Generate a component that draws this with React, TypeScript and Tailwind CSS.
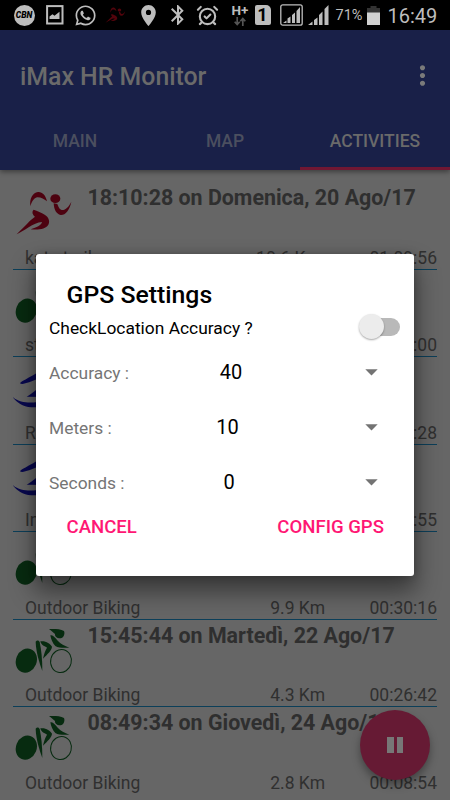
import React from "react";
import { FaWhatsapp } from "react-icons/fa";
import { MdLocationOn, MdBluetooth, MdMoreVert } from "react-icons/md";
import { AlarmClockCheck } from "lucide-react";

type Sport = "run" | "bike" | "swim";

interface Activity {
  sport: Sport;
  title: string;
  name: string;
  distance: string;
  duration: string;
}

const activities: Activity[] = [
  { sport: "run", title: "18:10:28 on Domenica, 20 Ago/17", name: "kat - trail", distance: "10.6 Km\u00a0", duration: "01:09:56" },
  { sport: "bike", title: "", name: "street", distance: "", duration: "00:30:00" },
  { sport: "swim", title: "", name: "Rowing", distance: "", duration: "00:21:28" },
  { sport: "swim", title: "", name: "Indoor", distance: "", duration: "00:40:55" },
  { sport: "bike", title: "", name: "Outdoor Biking", distance: "9.9 Km", duration: "00:30:16" },
  { sport: "bike", title: "15:45:44 on Martedì, 22 Ago/17", name: "Outdoor Biking", distance: "4.3 Km", duration: "00:26:42" },
  { sport: "bike", title: "08:49:34 on Giovedì, 24 Ago/17", name: "Outdoor Biking", distance: "2.8 Km", duration: "00:08:54" },
];

function RunnerShape() {
  return (
    <g>
      <path d="M91 110C88 88 97 69 114 67C127 66 137 77 141 95C132 88 122 82 111 83C102 85 95 96 91 110Z" />
      <ellipse cx="166" cy="87" rx="15" ry="13" />
      <path d="M161 101C162 121 169 133 182 136C196 137 209 121 214 96C206 112 196 122 186 121C177 119 175 110 172 103Z" />
      <path d="M101 120C112 123 124 129 134 135C146 142 151 155 145 165C137 178 118 181 92 179C110 173 124 167 126 157C112 158 100 164 86 173C74 181 61 188 50 194C61 182 76 168 90 153L105 141C97 135 95 125 101 120Z" />
    </g>
  );
}

function SportIcon({ sport }: { sport: Sport }) {
  if (sport === "run") {
    return (
      <svg className="h-[60px] w-[60px] shrink-0 fill-[#4d0210]" viewBox="39 37 180 180">
        <RunnerShape />
      </svg>
    );
  }
  if (sport === "bike") {
    return (
      <svg className="h-[60px] w-[60px] shrink-0 fill-[#072b10]" viewBox="39 150 180 180">
        <ellipse cx="79" cy="272" rx="31" ry="37" transform="rotate(22 79 272)" />
        <ellipse cx="183" cy="273" rx="31" ry="35" fill="none" stroke="#072b10" strokeWidth="3" transform="rotate(14 183 273)" />
        <path d="M107 215C111 210 117 211 119 217C124 240 127 268 127 303C118 278 108 246 107 215Z" />
        <path d="M121 214C135 211 151 220 156 230C155 241 143 252 129 266C132 252 136 241 141 233C134 228 124 227 121 214Z" />
        <path d="M151 196C159 193 166 204 174 213C181 222 194 228 208 233C192 234 176 234 166 228C158 221 153 207 151 196Z" />
        <path d="M147 177C162 177 181 176 192 183C196 192 190 204 182 205C173 206 164 200 165 192C159 187 154 182 147 177Z" />
      </svg>
    );
  }
  return (
    <svg className="h-[60px] w-[60px] shrink-0 fill-[#08084f]" viewBox="39 262 180 180">
      <path d="M60 341C63 335 85 326 110 310C132 297 151 293 165 305C146 309 126 324 110 329C93 336 68 347 60 341Z" />
      <path d="M80 381C90 377 99 368 111 359L132 351L153 382Z" />
      <path d="M38 382C57 399 83 400 108 398C145 395 173 388 207 397C173 404 133 414 94 413C67 411 49 397 38 382Z" />
    </svg>
  );
}

function ActivityRow({ item, last }: { item: Activity; last: boolean }) {
  return (
    <li className={last ? "flex h-[87.5px] flex-col" : "flex h-[87.5px] flex-col border-b border-[#0c3f59]"}>
      <div className="flex h-[65.6px]">
        <SportIcon sport={item.sport} />
        <h2 className="ml-[14.5px] h-[32px] whitespace-nowrap text-[21.4px] font-bold leading-[32px] text-[#2f2f2f]">{item.title}</h2>
      </div>
      <div className="flex h-[20px] whitespace-nowrap pl-3 text-[17.5px] leading-[20px] text-[#303030]">
        <span className="flex-1">{item.name}</span>
        <span className="w-[80px] text-right">{item.distance}</span>
        <span className="w-[112px] text-right">{item.duration}</span>
      </div>
    </li>
  );
}

function StatusBar() {
  return (
    <header className="flex h-[30px] items-center bg-black pl-[13.5px] text-[#bdbdbd]">
      <div className="flex h-[21px] w-[21px] items-center justify-center rounded-full bg-[#bdbdbd] text-[8.5px] font-black italic leading-none text-black">CBN</div>
      <svg className="ml-[11px] h-5 w-[18px]" viewBox="0 0 18 20">
        <rect x="1.1" y="1.1" width="15.4" height="17.4" fill="none" stroke="currentColor" strokeWidth="2" />
        <path d="M3.5 14V11.5L6.5 9.2L8.5 10.8L13.5 6.8V14Z" fill="currentColor" />
      </svg>
      <FaWhatsapp className="ml-[10px] h-[23px] w-[23px]" />
      <svg className="ml-[8px] h-[18px] w-[21px] fill-[#52040c]" viewBox="46 54 174 150">
        <RunnerShape />
      </svg>
      <MdLocationOn className="ml-[10px] h-[25px] w-[25px]" />
      <MdBluetooth className="ml-[5px] h-[24px] w-[24px]" />
      <AlarmClockCheck className="ml-[6px] h-[23px] w-[23px]" strokeWidth={2.2} />
      <div className="ml-[13px] flex w-[17px] flex-col items-center">
        <span className="text-[13.5px] font-bold leading-[13px]">H+</span>
        <svg className="h-[9px] w-[12px]" viewBox="0 0 12 9" fill="none" stroke="#555" strokeWidth="1.7">
          <path d="M3.2 0V7M0.7 4.7L3.2 7.5L5.7 4.7M8.8 9V2M6.3 4.3L8.8 1.5L11.3 4.3" />
        </svg>
      </div>
      <div className="ml-[6px] flex h-5 w-[16px] items-center justify-center rounded-[2px] rounded-tr-[5px] bg-[#bdbdbd] text-[18px] font-bold leading-none text-black">1</div>
      <svg className="ml-[9px] h-[22px] w-[23px]" viewBox="0 0 23 22" fill="currentColor">
        <rect x="0.8" y="0.8" width="21.4" height="20.4" rx="2" fill="none" stroke="currentColor" strokeWidth="1.3" />
        <path d="M3 19L6.5 16.5V19ZM7.5 14.5L10.5 12.5V19H7.5ZM12 11L15 8.5V19H12ZM16.5 7L20 3V19H16.5Z" />
      </svg>
      <svg className="ml-[5px] h-5 w-[21px]" viewBox="0 0 21 20" fill="currentColor">
        <path d="M0 20L4.5 16.5V20ZM6 15L9.5 12.5V20H6ZM11 10L14.5 6.5V20H11ZM16.5 4L20.5 0V20H16.5Z" />
      </svg>
      <span className="ml-[7px] mt-[2px] w-[28px] whitespace-nowrap text-[14.5px] leading-none">71%</span>
      <svg className="ml-[3px] h-[19px] w-[13px]" viewBox="0 0 13 19">
        <path d="M3.5 0H9.5V2H13V7H0V2H3.5Z" fill="#333" />
        <path d="M0 6.5H13V19H0Z" fill="#d0d0d0" />
      </svg>
      <span className="ml-[8px] mt-[1px] whitespace-nowrap text-[20px] leading-none">16:49</span>
    </header>
  );
}

function SettingRow({ label, value, width }: { label: string; value: string; width: string }) {
  return (
    <div className="flex h-[55px] items-center pl-[13px] pr-[36px]">
      <span className="mt-[2px] w-[157px] text-[17.4px] leading-6 text-[#757575]">{label}</span>
      <span className={width}>{value}</span>
      <svg className="ml-auto h-[7px] w-[13px] fill-[#737373]" viewBox="0 0 13 7">
        <path d="M0.3 0.3H12.7L6.5 6.5Z" />
      </svg>
    </div>
  );
}

function GpsDialog() {
  return (
    <section role="dialog" className="absolute left-[36px] top-[253.5px] h-[322.5px] w-[378px] whitespace-nowrap rounded-[3px] bg-white pt-[25px] shadow-[0_14px_24px_2px_rgba(0,0,0,0.45),0_0_8px_rgba(0,0,0,0.2)]">
      <h3 className="pl-[30.5px] text-[24.8px] font-medium leading-8 text-black">GPS Settings</h3>
      <div className="flex h-[34px] items-center justify-between pl-[13px] pr-[14px]">
        <span className="text-[17.4px] leading-6 text-black">CheckLocation Accuracy ?</span>
        <div className="-mt-[2px] flex h-[18px] w-[37px] items-center rounded-full bg-[#b9b9b9]">
          <div className="-ml-1 h-[25px] w-[25px] shrink-0 rounded-full bg-[#ececec] shadow-[0_1px_2px_rgba(0,0,0,0.35)]" />
        </div>
      </div>
      <SettingRow label="Accuracy :" value="40" width="w-[50px] text-center text-[20px] leading-6 text-black" />
      <SettingRow label="Meters :" value="10" width="w-[43px] text-center text-[20px] leading-6 text-black" />
      <SettingRow label="Seconds :" value="0" width="w-[46px] text-center text-[20px] leading-6 text-black" />
      <div className="flex h-[34px] items-center justify-between pl-[30.5px] pr-[30px] text-[18.6px] font-medium leading-6 text-[#ff1774]">
        <button>CANCEL</button>
        <button>CONFIG GPS</button>
      </div>
    </section>
  );
}

export default function App() {
  return (
    <main className="relative flex h-[800px] w-[450px] flex-col overflow-hidden bg-[#666] font-[Roboto,sans-serif]">
      <StatusBar />
      <div className="z-10 flex h-[140px] shrink-0 flex-col bg-[#192048] text-[#6a6a6a] shadow-[0_2px_5px_rgba(0,0,0,0.4)]">
        <div className="flex h-[92px] items-center justify-between pl-5 pr-[12px]">
          <h1 className="mt-[2px] text-[24.85px] font-medium leading-8">iMax HR Monitor</h1>
          <MdMoreVert className="-mt-[2px] h-[31px] w-[31px] text-[#7a7a7a]" />
        </div>
        <nav className="grid h-12 grid-cols-3 text-center text-[17.5px] font-medium leading-[38px]">
          <span className="text-[#4b4f5f]">MAIN</span>
          <span className="text-[#4b4f5f]">MAP</span>
          <span className="border-b-[3px] border-[#701733]">ACTIVITIES</span>
        </nav>
      </div>
      <ul className="flex flex-col px-[13px] pt-[12.3px]">
        {activities.map((item, i) => (
          <ActivityRow key={i} item={item} last={i === activities.length - 1} />
        ))}
      </ul>
      <button className="absolute left-[360px] top-[710px] flex h-[70px] w-[70px] items-center justify-center gap-[3px] rounded-full bg-[#661a34] shadow-[0_5px_9px_rgba(0,0,0,0.35)]">
        <span className="h-[16px] w-[6.5px] bg-[#777]" />
        <span className="h-[16px] w-[6.5px] bg-[#777]" />
      </button>
      <GpsDialog />
    </main>
  );
}
